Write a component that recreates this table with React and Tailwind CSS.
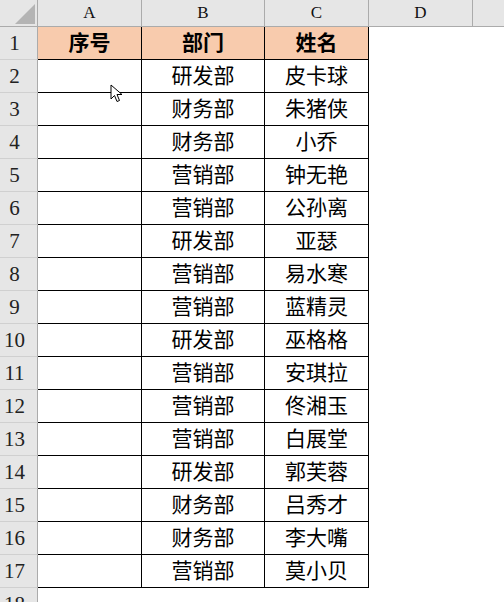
import React from 'react'

const rows = [
  ['研发部', '皮卡球'],
  ['财务部', '朱猪侠'],
  ['财务部', '小乔'],
  ['营销部', '钟无艳'],
  ['营销部', '公孙离'],
  ['研发部', '亚瑟'],
  ['营销部', '易水寒'],
  ['营销部', '蓝精灵'],
  ['研发部', '巫格格'],
  ['营销部', '安琪拉'],
  ['营销部', '佟湘玉'],
  ['营销部', '白展堂'],
  ['研发部', '郭芙蓉'],
  ['财务部', '吕秀才'],
  ['财务部', '李大嘴'],
  ['营销部', '莫小贝']
]

const cjk = { fontFamily: '"Liberation Serif", "Noto Sans CJK SC", serif' }

function RowHead({ n }) {
  return (
    <div
      className="h-[33px] bg-[#e6e6e6] border-r border-b border-r-[#ababab] border-b-[#d0d0d0] flex items-center justify-center pr-[8px] pt-[2px] text-[21px] text-[#222]"
      style={{ fontFamily: '"Liberation Serif", serif' }}
    >
      {n}
    </div>
  )
}

function Cell({ children, bold, peach }) {
  return (
    <div
      className={`h-[33px] border-r border-b border-black flex items-center justify-center pt-[2px] text-[21px] text-black ${
        peach ? 'bg-[#f8cbad]' : 'bg-white'
      } ${bold ? 'font-bold' : ''}`}
      style={cjk}
    >
      {children}
    </div>
  )
}

export default function App() {
  const colHead = 'h-[27px] bg-[#e6e6e6] border-r border-b border-[#ababab] flex items-end justify-center pb-[1px] text-[17px] text-[#111]'
  return (
    <div className="relative w-[504px] h-[602px] overflow-hidden bg-white">
      <div className="grid grid-cols-[38px_104px_123px_104px_104px_1fr]">
        {/* Column headers */}
        <div className="h-[27px] bg-[#e6e6e6] border-r border-b border-[#ababab] relative">
          <svg className="absolute left-0 top-0" width="38" height="27">
            <polygon points="35,4 35,24 15,24" fill="#b4b4b4" />
          </svg>
        </div>
        {['A', 'B', 'C', 'D'].map((c) => (
          <div key={c} className={colHead} style={{ fontFamily: '"Liberation Serif", serif' }}>
            {c}
          </div>
        ))}
        <div className="h-[27px] bg-[#e6e6e6] border-b border-[#ababab]" />

        {/* Row 1 */}
        <RowHead n={1} />
        <Cell bold peach>序号</Cell>
        <Cell bold peach>部门</Cell>
        <Cell bold peach>姓名</Cell>
        <div className="h-[33px]" />
        <div className="h-[33px]" />

        {rows.map(([dept, name], i) => (
          <React.Fragment key={i}>
            <RowHead n={i + 2} />
            <Cell />
            <Cell>{dept}</Cell>
            <Cell>{name}</Cell>
            <div className="h-[33px]" />
            <div className="h-[33px]" />
          </React.Fragment>
        ))}

        <RowHead n={18} />
      </div>

      {/* mouse pointer */}
      <svg className="absolute left-[110px] top-[84px]" width="14" height="20" viewBox="0 0 14 20">
        <path
          d="M1 1 L1 15 L4.5 11.5 L7 17.5 L9.5 16.5 L7 10.5 L12 10.5 Z"
          fill="#fff"
          stroke="#000"
          strokeWidth="1"
          strokeLinejoin="miter"
        />
      </svg>
    </div>
  )
}
